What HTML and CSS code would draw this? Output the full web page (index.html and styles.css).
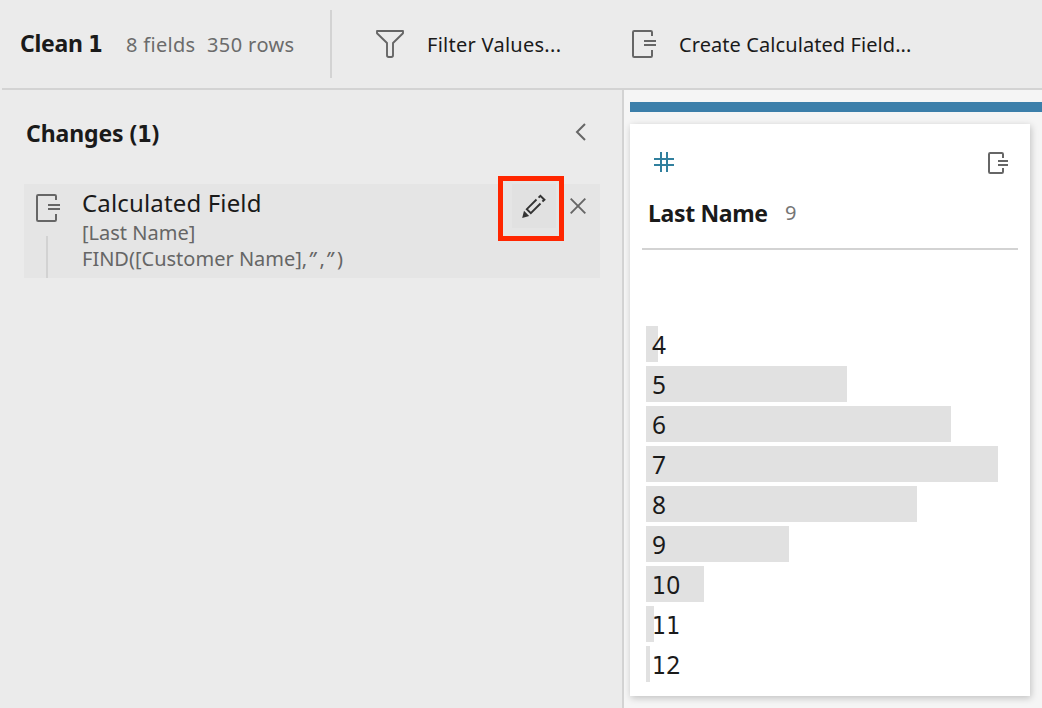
FILE: index.html
```
<!DOCTYPE html>
<html lang="en">
<head>
<meta charset="utf-8">
<title>Clean 1</title>
<link rel="stylesheet" href="styles.css">
</head>
<body>
<svg class="defs" aria-hidden="true">
  <symbol id="calc" viewBox="0 0 26 28">
    <path d="M20 6V2.2Q20 1 18.8 1H2.2Q1 1 1 2.2V25.8Q1 27 2.2 27H18.8Q20 27 20 25.8V20M12 11H24M12 15H24" fill="none" stroke="currentColor" stroke-width="2"/>
  </symbol>
</svg>
<header class="toolbar">
  <h1 class="step-name">Clean <span class="num">1</span></h1>
  <span class="fields">8 fields</span>
  <span class="rows">350 rows</span>
  <span class="divider"></span>
  <button class="tool filter"><svg width="30" height="30" viewBox="0 0 30 30"><path d="M2 2H28V4.2L18 14V26.3Q18 28 16.3 28H13.7Q12 28 12 26.3V14L2 4.2Z" fill="none" stroke="currentColor" stroke-width="1.9" stroke-linejoin="round"/></svg><span>Filter Values...</span></button>
  <button class="tool create"><svg width="26" height="28"><use href="#calc"/></svg><span>Create Calculated Field...</span></button>
</header>
<main class="workspace">
  <aside class="changes">
    <div class="changes-head">
      <h2>Changes (<span class="num">1</span>)</h2>
      <svg class="collapse" width="12" height="18" viewBox="0 0 12 18"><path d="M10 1L2 9L10 17" fill="none" stroke="currentColor" stroke-width="2"/></svg>
    </div>
    <div class="change">
      <div class="rail"><svg width="26" height="28"><use href="#calc"/></svg><span class="line"></span></div>
      <div class="detail">
        <div class="title">Calculated Field</div>
        <div class="field">[Last Name]</div>
        <div class="formula">FIND([Customer Name],<i>”</i>,<i>”</i>)</div>
      </div>
      <button class="edit"><span class="edit-bg"><svg width="26" height="26" viewBox="0 0 26 26"><path d="M15.5 6.5L5.8 16.2L9.8 20.2L19.5 10.5" fill="none" stroke="currentColor" stroke-width="1.9"/><path d="M17.6 4.6L19.4 2.8L23.4 6.8L21.4 8.6" fill="none" stroke="currentColor" stroke-width="2"/><path d="M3 17.8L8.2 23L1.2 25Z" fill="currentColor"/></svg></span></button>
      <svg class="remove" width="16" height="16" viewBox="0 0 16 16"><path d="M.7 .7L15.3 15.3M15.3 .7L.7 15.3" stroke="currentColor" stroke-width="1.9"/></svg>
    </div>
  </aside>
  <section class="profile">
    <div class="accent"></div>
    <article class="card">
      <div class="card-icons">
        <svg class="hash" width="20" height="20" viewBox="0 0 20 20"><path d="M7 0V20M13 0V20M0 7H20M0 13H20" stroke="currentColor" stroke-width="2"/></svg>
        <svg class="calc-small" width="21" height="22" viewBox="0 0 21 22"><path d="M15 6V2.2Q15 1 13.8 1H2.2Q1 1 1 2.2V19.8Q1 21 2.2 21H13.8Q15 21 15 19.8V16M10 9H20M10 13H20" fill="none" stroke="currentColor" stroke-width="2"/></svg>
      </div>
      <div class="card-title"><h3>Last Name</h3><span>9</span></div>
      <ul class="bars">
        <li><span class="bar" style="width:12px">4</span></li>
        <li><span class="bar" style="width:201px">5</span></li>
        <li><span class="bar" style="width:305px">6</span></li>
        <li><span class="bar" style="width:352px">7</span></li>
        <li><span class="bar" style="width:271px">8</span></li>
        <li><span class="bar" style="width:143px">9</span></li>
        <li><span class="bar" style="width:58px"><span class="num">1</span>0</span></li>
        <li><span class="bar" style="width:8px"><span class="num">11</span></span></li>
        <li><span class="bar" style="width:4px"><span class="num">1</span>2</span></li>
      </ul>
    </article>
  </section>
</main>
</body>
</html>
```
FILE: styles.css
```
* { box-sizing: border-box; margin: 0; padding: 0; }
body {
  width: 1042px; height: 708px; overflow: hidden;
  display: flex; flex-direction: column;
  background: #ebebeb; color: #1a1a1a;
  font-family: "Noto Sans", sans-serif; font-size: 20px;
  white-space: nowrap;
}
svg { display: block; flex: none; }
.defs { display: none; }
button { border: 0; background: none; font: inherit; color: inherit; }
.num { font-family: "DejaVu Sans Condensed", "DejaVu Sans", sans-serif; font-stretch: condensed; }

.toolbar {
  flex: none; height: 90px; display: flex; align-items: flex-start;
  margin-left: 2px; padding-left: 18px; border-bottom: 2px solid #d3d3d3;
  line-height: 90px;
}
.step-name { width: 106px; font-size: 23px; line-height: 86px; font-weight: 700; letter-spacing: -.3px; }
.fields { width: 81px; color: #6b6b6b; letter-spacing: .3px; }
.rows { width: 123px; color: #6b6b6b; letter-spacing: .4px; }
.divider { width: 2px; height: 68px; margin-top: 10px; background: #d3d3d3; }
.tool { display: flex; align-items: center; height: 88px; line-height: 28px; }
.tool svg { color: #666; }
.tool span { padding-top: 2px; }
.filter { margin-left: 43px; width: 257px; letter-spacing: .27px; }
.filter svg { margin-right: 22px; }
.create { letter-spacing: .08px; }
.create svg { margin-right: 21px; }

.workspace { flex: 1; display: flex; min-height: 0; }
.changes { width: 624px; padding: 27px 22px 0 24px; border-right: 2px solid #d3d3d3; }
.changes-head { display: flex; justify-content: space-between; height: 67px; padding: 0 13px 0 2px; }
.changes-head h2 { font-size: 23px; line-height: 32px; letter-spacing: -.1px; }
.collapse { margin-top: 6px; color: #666; }
.change { display: flex; height: 94px; background: #e5e5e5; color: #666; }
.rail { width: 58px; padding: 10px 0 0 12px; }
.line { display: block; width: 2px; height: 42px; margin: 14px 0 0 10px; background: #d2d2d2; }
.detail { width: 416px; padding-top: 3px; line-height: 26px; }
.title { font-size: 24px; line-height: 31px; margin-bottom: 2px; letter-spacing: .15px; color: #1a1a1a; }
.formula i { margin-left: 1px; letter-spacing: 4px; }
.edit { width: 66px; height: 65px; margin-top: -8px; border: 5px solid #ff2600; padding: 3px 3px 8px 9px; background: #e5e5e5; }
.edit-bg { display: flex; width: 44px; height: 44px; align-items: center; justify-content: center; background: #e1e1e1; color: #333; }
.remove { margin: 14px 0 0 6px; }

.profile { flex: 1; padding: 12px 0 0 6px; background: #f5f5f5; }
.accent { height: 10px; background: #3c7faa; }
.card { width: 400px; height: 572px; margin-top: 12px; padding: 28px 11px 0 12px; background: #fff; box-shadow: 1px 2px 7px rgba(0,0,0,.22); }
.card-icons { display: flex; justify-content: space-between; padding: 0 10px 0 12px; height: 41px; }
.hash { color: #31809e; }
.calc-small { color: #666; }
.card-title { display: flex; height: 57px; margin-right: 1px; padding-left: 6px; border-bottom: 2px solid #d3d3d3; line-height: 40px; }
.card-title h3 { width: 137px; font-size: 23px; letter-spacing: -.35px; }
.card-title span { color: #757575; }
.bars { list-style: none; margin: 76px 0 0 4px; display: grid; gap: 4px; }
.bars li { height: 36px; }
.bar { display: block; height: 36px; text-indent: 6px; background: #e1e1e1; font-size: 24.5px; line-height: 38px; color: #1a1a1a; letter-spacing: .3px; }
```
